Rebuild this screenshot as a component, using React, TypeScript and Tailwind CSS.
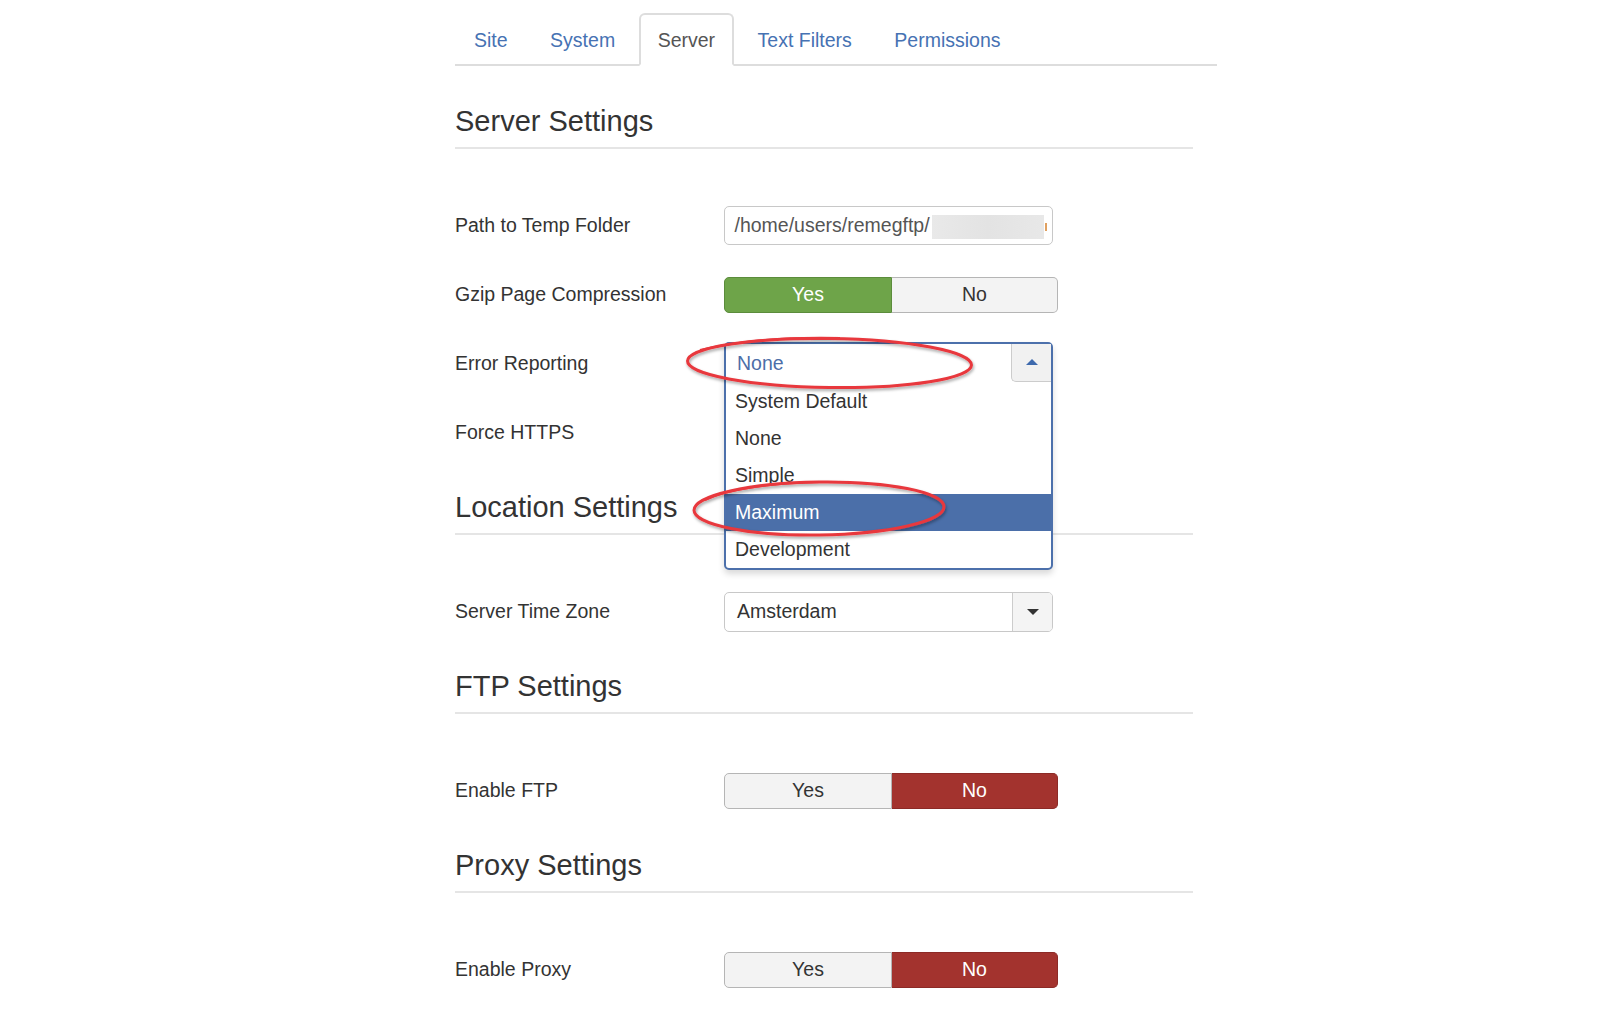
import React from "react";

function Legend({ children, first }: { children: React.ReactNode; first?: boolean }) {
  return (
    <div
      className={`h-[54px] mb-[56px] border-b-2 border-[#e5e5e5] text-[29px] leading-[52px] text-[#333] ${
        first ? "" : "mt-[1px]"
      }`}
    >
      {children}
    </div>
  );
}

function Row({ label, children }: { label: string; children?: React.ReactNode }) {
  return (
    <div className="flex items-center h-[42px] mb-[27px]">
      <div className="w-[269px] shrink-0 text-[19.5px] text-[#333]">{label}</div>
      <div className="relative h-[42px] flex items-center">{children}</div>
    </div>
  );
}

function Toggle({ yes }: { yes: boolean }) {
  return (
    <div className="flex h-[36px] w-[334px] text-[19.5px]">
      <div
        className={`w-[168px] flex items-center justify-center rounded-l-[5px] border-[1.5px] ${
          yes
            ? "bg-[#6ea449] border-[#5b8c3c] text-white"
            : "bg-[#f3f3f3] border-[#b5b5b5] text-[#333]"
        }`}
      >
        Yes
      </div>
      <div
        className={`w-[166px] flex items-center justify-center rounded-r-[5px] border-[1.5px] border-l-0 ${
          yes
            ? "bg-[#f3f3f3] border-[#b5b5b5] text-[#333]"
            : "bg-[#a3332e] border-[#8c2a26] text-white"
        }`}
      >
        No
      </div>
    </div>
  );
}

export default function App() {
  const tabs = ["Site", "System", "Server", "Text Filters", "Permissions"];
  const options = ["System Default", "None", "Simple", "Maximum", "Development"];
  return (
    <div className="relative min-h-[1029px] bg-white pl-[455px] font-['Liberation_Sans',Arial,sans-serif] text-[#333]">
      {/* Tabs */}
      <ul className="flex w-[762px] pt-[13px] border-b-2 border-[#dddddd]">
        {tabs.map((t) => {
          const active = t === "Server";
          return (
            <li key={t} className="-mb-[2px] mr-[4.5px]">
              <div
                className={`px-[17px] pt-[12px] pb-[10px] border-2 rounded-t-[6px] text-[19.5px] leading-[27px] ${
                  active
                    ? "border-[#dddddd] border-b-white bg-white text-[#555]"
                    : "border-transparent text-[#4672b3]"
                }`}
              >
                {t}
              </div>
            </li>
          );
        })}
      </ul>

      <div className="w-[738px] pt-[28.5px]">
        <Legend first>Server Settings</Legend>

        <Row label="Path to Temp Folder">
          <div className="flex items-center w-[329px] h-[39px] border-[1.5px] border-[#c8c8c8] rounded-[5px] pl-[9.5px] text-[19.5px] text-[#555] overflow-hidden">
            <span>/home/users/remegftp/</span>
            <span className="ml-[2px] mt-[3px] h-[24px] w-[112px] bg-gradient-to-r from-[#e9e9e9] via-[#e3e3e3] to-[#e8e8e8] blur-[0.6px]" />
            <span className="ml-[1px] mt-[2px] h-[8px] w-[2px] bg-[#e0a060]" />
          </div>
        </Row>

        <Row label="Gzip Page Compression">
          <Toggle yes />
        </Row>

        <Row label="Error Reporting">
          <div className="w-[329px] h-[39px]" />
          <div className="absolute left-0 -top-[1px] z-10 w-[329px] border-2 border-[#4c70ab] rounded-[5px] bg-white shadow-[0_4px_6px_rgba(0,0,0,0.15)] text-[19.5px]">
            <div className="flex h-[39px]">
              <div className="flex-1 pl-[11px] leading-[38px] text-[#4c6ea8]">None</div>
              <div className="w-[40px] h-[38px] flex items-center justify-center bg-[#f1f1f1] border-l-[1.5px] border-b-[1.5px] border-[#cccccc] rounded-bl-[5px]">
                <div className="w-0 h-0 border-l-[6px] border-r-[6px] border-b-[6px] border-l-transparent border-r-transparent border-b-[#3e6aad]" />
              </div>
            </div>
            {options.map((o) => (
              <div
                key={o}
                className={`h-[37px] leading-[37px] pl-[9px] ${
                  o === "Maximum" ? "bg-[#4b6fa9] text-white" : "text-[#333]"
                }`}
              >
                {o}
              </div>
            ))}
          </div>
        </Row>

        <Row label="Force HTTPS" />

        <Legend>Location Settings</Legend>

        <Row label="Server Time Zone">
          <div className="flex w-[329px] h-[40px] border-[1.5px] border-[#c8c8c8] rounded-[5px] overflow-hidden text-[19.5px]">
            <div className="flex-1 pl-[12px] leading-[37px] text-[#333]">Amsterdam</div>
            <div className="w-[40px] flex items-center justify-center bg-[#f4f4f4] border-l-[1.5px] border-[#cccccc]">
              <div className="w-0 h-0 border-l-[6px] border-r-[6px] border-t-[6px] border-l-transparent border-r-transparent border-t-[#333]" />
            </div>
          </div>
        </Row>

        <Legend>FTP Settings</Legend>

        <Row label="Enable FTP">
          <Toggle yes={false} />
        </Row>

        <Legend>Proxy Settings</Legend>

        <Row label="Enable Proxy">
          <Toggle yes={false} />
        </Row>
      </div>

      {/* Red annotation ellipses */}
      <svg
        className="absolute left-0 top-0 z-20 pointer-events-none"
        width="1609"
        height="1029"
        viewBox="0 0 1609 1029"
      >
        <defs>
          <filter id="sh" x="-10%" y="-30%" width="120%" height="160%">
            <feDropShadow dx="1" dy="2" stdDeviation="1.5" floodColor="#000" floodOpacity="0.35" />
          </filter>
        </defs>
        <g filter="url(#sh)" fill="none" stroke="#e8383e" strokeWidth="3">
          <ellipse cx="829.5" cy="363" rx="142" ry="24.5" transform="rotate(0.8 829.5 363)" />
          <path d="M 700 350 Q 760 336 840 338" strokeWidth="2" />
          <ellipse cx="819" cy="508.5" rx="125" ry="26.5" transform="rotate(-0.8 819 508.5)" />
          <path d="M 705 500 Q 740 484 820 482" strokeWidth="2" />
        </g>
      </svg>
    </div>
  );
}
